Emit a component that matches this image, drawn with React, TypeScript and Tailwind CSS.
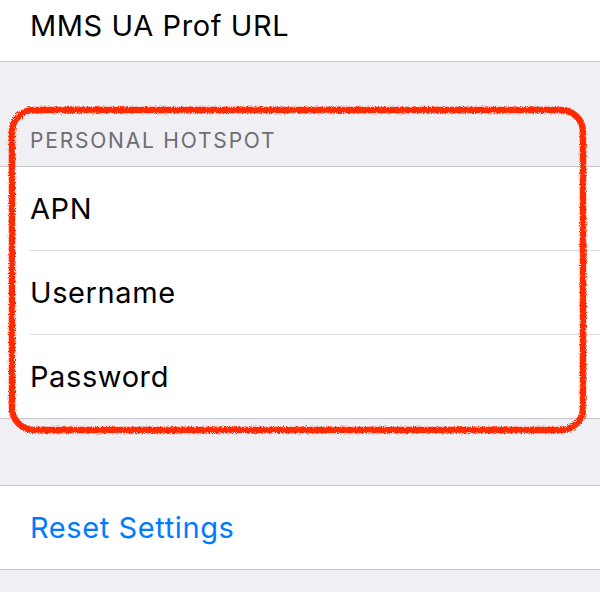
import React from 'react';

function Row({ label, last, blue }: { label: string; last?: boolean; blue?: boolean }) {
  return (
    <div className="bg-white">
      <div className={`h-[83px] flex items-center pl-[30px] text-[29px] tracking-[0.6px] ${blue ? 'text-[#007aff]' : 'text-black'}`}>
        {label}
      </div>
      {!last && <div className="ml-[30px] h-px bg-[#dcdce0]" />}
    </div>
  );
}

function Scribble() {
  return (
    <svg className="absolute inset-0 pointer-events-none" width="600" height="592" viewBox="0 0 600 592">
      <defs>
        <filter id="rough" x="-5%" y="-5%" width="110%" height="110%">
          <feTurbulence type="fractalNoise" baseFrequency="1.1" numOctaves="2" seed="3" result="noise" />
          <feDisplacementMap in="SourceGraphic" in2="noise" scale="4" />
        </filter>
      </defs>
      <rect
        x="12" y="110" width="571" height="320" rx="22" ry="22"
        fill="none" stroke="#ff2a00" strokeWidth="6.5"
        filter="url(#rough)"
      />
    </svg>
  );
}

export default function App() {
  return (
    <div className="relative w-[600px] h-[592px] overflow-hidden bg-[#efeff4]" style={{ fontFamily: 'Inter, "Noto Sans", sans-serif' }}>
      <div className="bg-white h-[61px] flex items-end pl-[30px] pb-[21px] text-[29px] tracking-[0.6px] text-black leading-none">
        MMS UA Prof URL
      </div>
      <div className="h-px bg-[#c8c7cc]" />

      <div className="h-[104px] flex items-end pl-[30px] pb-[15px] text-[21px] text-[#6d6d72] tracking-[1.8px] leading-none">
        PERSONAL HOTSPOT
      </div>
      <div className="h-px bg-[#c8c7cc]" />
      <Row label="APN" />
      <Row label="Username" />
      <Row label="Password" last />
      <div className="h-px bg-[#c8c7cc]" />

      <div className="h-[66px]" />
      <div className="h-px bg-[#c8c7cc]" />
      <Row label="Reset Settings" last blue />
      <div className="h-px bg-[#c8c7cc]" />

      <Scribble />
    </div>
  );
}
